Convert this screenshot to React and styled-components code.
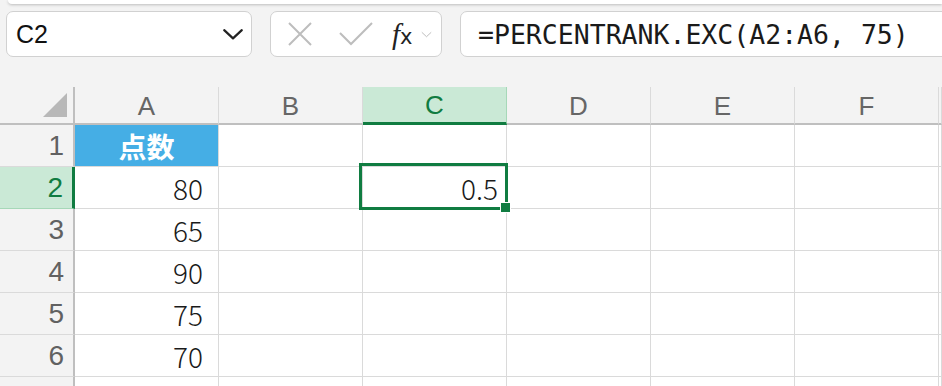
import React from 'react'
import styled, { createGlobalStyle } from 'styled-components'

const GREEN = '#107c41'
const GREEN_BG = '#cae9d6'
const LINE = '#dadada'
const HEAD_LINE = '#bfbfbf'
const COLS = ['A', 'B', 'C', 'D', 'E', 'F']

const GlobalStyle = createGlobalStyle`
  html, body {
    margin: 0;
    background: #f3f3f3;
    overflow: hidden;
  }
  * {
    box-sizing: border-box;
  }
`

const Page = styled.div`
  width: 942px;
  height: 386px;
  overflow: hidden;
  font-family: 'Liberation Sans', Arial, sans-serif;
`

const Ribbon = styled.div`
  height: 4px;
  margin-left: 8px;
  background: #fff;
  border-bottom-left-radius: 10px;
  box-shadow: 0 1px 3px rgba(0, 0, 0, 0.22);
`

const FormulaBar = styled.div`
  display: flex;
  align-items: center;
  gap: 18px;
  padding: 7px 0 0 6px;
  margin-right: -20px;
`

const Box = styled.div`
  height: 46px;
  background: #fff;
  border: 1.5px solid #d1d1d1;
  border-radius: 7px;
  display: flex;
  align-items: center;
`

const NameBox = styled(Box)`
  width: 246px;
  justify-content: space-between;
  padding: 0 7px 0 9px;
  font-size: 25px;
  color: #111;
`

const FuncBox = styled(Box)`
  width: 172px;
  padding: 0 8px 0 16px;
  gap: 26px;
`

const Fx = styled.span`
  display: flex;
  align-items: baseline;
  color: #222;
  margin-left: -7px;
  i {
    font-family: 'Liberation Serif', serif;
    font-size: 29px;
  }
  span {
    font-family: 'DejaVu Sans', sans-serif;
    font-size: 21px;
    margin-left: 0;
  }
`

const FxChevron = styled.div`
  margin-left: 8px;
  align-self: center;
  display: flex;
`

const FormulaInput = styled(Box)`
  flex: 1;
  padding-left: 17px;
  font-family: 'DejaVu Sans Mono', monospace;
  font-size: 26.5px;
  color: #1a1a1a;
`

const Grid = styled.div`
  display: grid;
  margin-top: 30px;
  grid-template-columns: 75px repeat(6, 144px) 1fr;
  grid-template-rows: 38px repeat(7, 42px);
`

const Corner = styled.div`
  background: #f3f3f3;
  border-right: 2px solid ${HEAD_LINE};
  border-bottom: 2px solid ${HEAD_LINE};
  display: flex;
  align-items: flex-end;
  justify-content: flex-end;
  padding: 0 6px 6px 0;
`

const CornerTriangle = styled.div`
  width: 24px;
  height: 24px;
  background: #b8b8b8;
  clip-path: polygon(100% 0, 100% 100%, 0 100%);
`

const ColHead = styled.div`
  display: flex;
  align-items: center;
  justify-content: center;
  background: ${(p) => (p.$active ? GREEN_BG : '#f3f3f3')};
  color: ${(p) => (p.$active ? GREEN : '#666')};
  border-right: 1px solid ${(p) => (p.$active ? '#a6d8b8' : LINE)};
  border-bottom: ${(p) => (p.$active ? `3px solid ${GREEN}` : `2px solid ${HEAD_LINE}`)};
  font-size: 26px;
  padding-top: 2px;
`

const RowHead = styled.div`
  display: flex;
  align-items: center;
  justify-content: flex-end;
  padding-right: 9px;
  background: ${(p) => (p.$active ? GREEN_BG : '#f3f3f3')};
  color: ${(p) => (p.$active ? GREEN : '#616161')};
  border-right: ${(p) => (p.$active ? `3px solid ${GREEN}` : `2px solid ${HEAD_LINE}`)};
  border-bottom: 1px solid ${(p) => (p.$active ? '#a6d8b8' : LINE)};
  font-size: 28px;
`

const Cell = styled.div`
  position: relative;
  display: flex;
  align-items: center;
  justify-content: ${(p) => (p.$center ? 'center' : 'flex-end')};
  padding-right: ${(p) => p.$pad || 0}px;
  background: ${(p) => p.$fill || '#fff'};
  color: ${(p) => (p.$fill ? '#fff' : '#1a1a1a')};
  font-weight: ${(p) => (p.$fill ? 700 : 300)};
  border-right: 1px solid ${LINE};
  border-bottom: 1px solid ${LINE};
  font-family: 'Noto Sans CJK JP', 'Noto Sans', sans-serif;
  font-size: 28px;
`

const Selection = styled.div`
  position: absolute;
  top: -4px;
  left: -4px;
  right: -2px;
  bottom: -2px;
  border: 3px solid ${GREEN};
  z-index: 2;
`

const Handle = styled.div`
  position: absolute;
  right: -6px;
  bottom: -6px;
  width: 11px;
  height: 11px;
  background: ${GREEN};
  border: 1px solid #fff;
`

const scores = [80, 65, 90, 75, 70]

function Chevron({ size = 20, color = '#222', width = 2 }) {
  return (
    <svg width={size} height={size} viewBox="0 0 20 20" fill="none">
      <path d="M2 6.5 L10 14 L18 6.5" stroke={color} strokeWidth={width} strokeLinecap="round" strokeLinejoin="round" />
    </svg>
  )
}

function cellFor(row, col) {
  if (col === 0 && row === 1) return { text: '点数', fill: '#45aee5', center: true }
  if (col === 0 && row > 1 && row < 7) return { text: scores[row - 2], pad: 15 }
  if (col === 2 && row === 2) return { text: '0.5', pad: 8, selected: true }
  return { text: '' }
}

export default function App() {
  const rows = [1, 2, 3, 4, 5, 6, 7]

  return (
    <Page>
      <GlobalStyle />
      <Ribbon />
      <FormulaBar>
        <NameBox>
          <span>C2</span>
          <Chevron size={22} />
        </NameBox>
        <FuncBox>
          <svg width="26" height="26" viewBox="0 0 26 26">
            <path d="M2 2 L24 24 M24 2 L2 24" stroke="#bdbdbd" strokeWidth="2" />
          </svg>
          <svg width="34" height="24" viewBox="0 0 34 24">
            <path d="M1 11 L12 22 L33 1" stroke="#bdbdbd" strokeWidth="2" fill="none" />
          </svg>
          <Fx>
            <i>f</i>
            <span>x</span>
            <FxChevron>
              <Chevron size={11} color="#b5b5b5" width={1.6} />
            </FxChevron>
          </Fx>
        </FuncBox>
        <FormulaInput>=PERCENTRANK.EXC(A2:A6, 75)</FormulaInput>
      </FormulaBar>

      <Grid>
        <Corner>
          <CornerTriangle />
        </Corner>
        {COLS.map((c) => (
          <ColHead key={c} $active={c === 'C'}>{c}</ColHead>
        ))}
        <ColHead />

        {rows.map((r) => (
          <React.Fragment key={r}>
            <RowHead $active={r === 2}>{r < 7 ? r : ''}</RowHead>
            {COLS.map((c, ci) => {
              const cell = cellFor(r, ci)
              return (
                <Cell key={c} $fill={cell.fill} $center={cell.center} $pad={cell.pad}>
                  {cell.text}
                  {cell.selected && (
                    <Selection>
                      <Handle />
                    </Selection>
                  )}
                </Cell>
              )
            })}
            <Cell />
          </React.Fragment>
        ))}
      </Grid>
    </Page>
  )
}
